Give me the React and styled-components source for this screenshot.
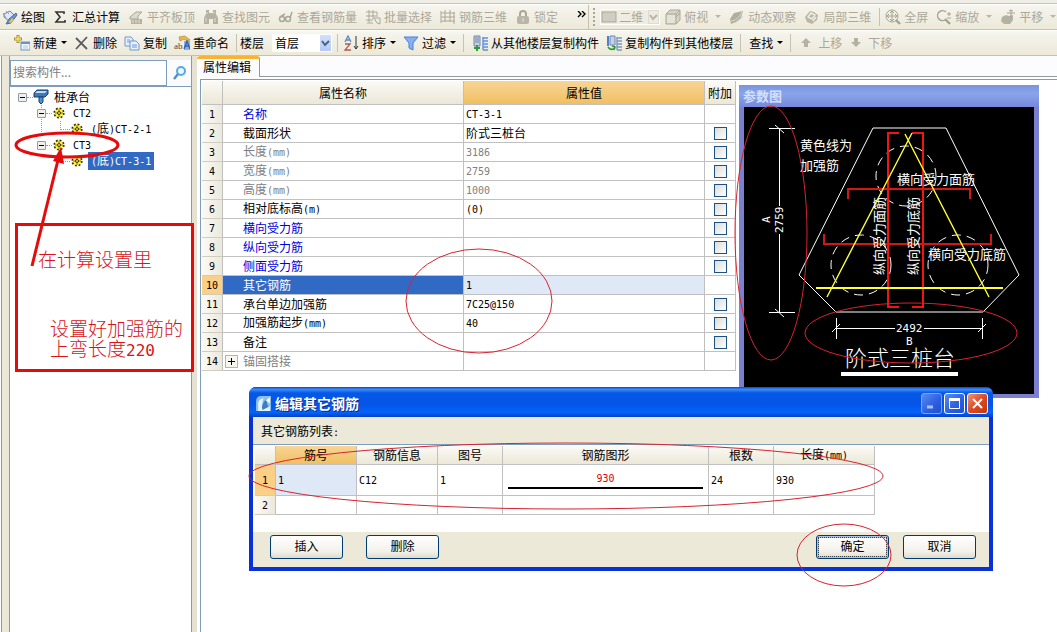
import React from 'react'
import styled, { createGlobalStyle, css } from 'styled-components'

const GlobalStyle = createGlobalStyle`
* {
    box-sizing: border-box;
}
body {
    margin: 0;
    background: #ffffff;
    color: #000000;
    font-family: "Noto Sans CJK SC", "Liberation Sans", sans-serif;
    font-size: 12px;
    line-height: 16px;
    overflow: hidden;
}
button, input, select {
    font: inherit;
    color: inherit;
    margin: 0;
}
`;

const Page = styled.div`
display: flex;
flex-direction: column;
min-height: 100vh;
position: relative;
overflow: hidden;
`;

const MenuEdge = styled.div`
height: 4px;
background: #efeee6;
border-bottom: 1px solid #c9c6b4;
`;

const ToolButton = styled.button`
display: flex;
align-items: center;
flex-shrink: 0;
gap: 3px;
padding: 0 8px 0 0;
border: 0;
background: none;
color: ${props => props.disabled ? '#aca899' : '#000000'};
`;

const Bar = styled.div`
display: flex;
align-items: center;
height: 26px;
padding-left: ${props => props.$indent}px;
overflow: hidden;
white-space: nowrap;
background: linear-gradient(#f6f5ef, #ece9d8);
border-top: 1px solid #fdfdfa;
border-bottom: 1px solid #c5c2ae;
    ${ToolButton} {
        padding-right: ${props => props.$tight ? 7 : 8}px;
    }
`;

const Separator = styled.span`
flex-shrink: 0;
width: 1px;
height: 18px;
margin: 0 ${props => props.$gap || 5}px 0 0;
background: #c5c2b0;
`;

const Grip = styled.span`
flex-shrink: 0;
width: 2px;
height: 18px;
margin: 0 5px 0 4px;
background: repeating-linear-gradient(#a9a695 0 2px, transparent 2px 4px);
`;

const Overflow = styled.button`
flex-shrink: 0;
width: 23px;
height: 24px;
padding: 0 2px 8px 11px;
border: 0;
border-right: 1px solid #c5c2b0;
background: none;
line-height: 14px;
`;

const BarLabel = styled.label`
flex-shrink: 0;
padding-right: 8px;
`;

const Combo = styled.span`
position: relative;
display: flex;
align-items: center;
flex-shrink: 0;
width: 60px;
height: ${props => props.$disabled ? 16 : 18}px;
margin-right: 5px;
border: 1px solid #fdfdfb;
background: ${props => props.$disabled ? '#efede1' : '#ffffff'};
color: ${props => props.$disabled ? '#aca899' : '#000000'};
    select {
        appearance: none;
        flex: 1;
        min-width: 0;
        padding: 0 0 0 2px;
        border: 0;
        background: none;
        color: inherit;
        opacity: 1;
        line-height: 16px;
    }
`;

const ComboArrow = styled.span`
display: flex;
align-items: center;
justify-content: center;
width: 11px;
height: 100%;
background: ${props => props.$disabled ? '#eeece2' : 'linear-gradient(#d3e0fc, #b4c9f4)'};
border: ${props => props.$disabled ? '1px solid #dedbd0' : '0'};
`;

const Body = styled.div`
display: flex;
flex: 1;
`;

const Edge = styled.div`
width: 9px;
flex-shrink: 0;
background: #ebe8d9;
border-left: 1px solid #ffffff;
box-shadow: inset 1px 0 #7f9db9;
`;

const SidePanel = styled.aside`
width: 183px;
flex-shrink: 0;
display: flex;
flex-direction: column;
padding-top: 4px;
background: #f1f0e8;
border-left: 1px solid #7f9db9;
border-right: 1px solid #7f9db9;
`;

const SearchRow = styled.div`
display: flex;
align-items: center;
background: #fbfbfd;
    input {
        width: 158px;
        height: 26px;
        padding: 0 2px 4px;
        border: 1px solid #7f9db9;
        background: #ffffff;
    }
    input::placeholder {
        color: #808080;
        opacity: 1;
    }
    button {
        display: flex;
        padding: 4px;
        border: 0;
        background: none;
    }
`;

const Tree = styled.ul`
flex: 1;
margin: 0;
padding: 2px 0 0;
list-style: none;
background: #ffffff;
border-top: 1px solid #7f9db9;
`;

const trunk = css`
background: repeating-linear-gradient(#9a9a9a 0 1px, transparent 1px 2px) 31px 0 / 1px 16px no-repeat;
`;

const TreeRow = styled.li`
display: flex;
align-items: center;
height: 16px;
padding-left: ${props => [8, 27, 50][props.$level]}px;
${props => props.$trunk && trunk}
`;

const Toggle = styled.button`
width: 9px;
height: 9px;
padding: 0;
border: 1px solid #8b9bb0;
border-radius: 1px;
background: linear-gradient(#000000, #000000) center / 5px 1px no-repeat, #f1f0ea;
`;

const Branch = styled.span`
width: ${props => props.$wide ? 10 : 6}px;
height: ${props => props.$wide ? 9 : 1}px;
align-self: ${props => props.$wide ? 'flex-start' : 'center'};
border-bottom: 1px dotted #9a9a9a;
border-left: ${props => props.$wide ? '1px dotted #9a9a9a' : '0'};
`;

const NodeName = styled.span`
margin-left: 2px;
padding: 0 3px;
background: ${props => props.$selected ? '#316ac5' : 'none'};
color: ${props => props.$selected ? '#ffffff' : '#000000'};
`;

const Splitter = styled.div`
width: 5px;
flex-shrink: 0;
background: #e5e2d3;
`;

const Main = styled.main`
flex: 1;
min-width: 0;
display: flex;
flex-direction: column;
background: #ffffff;
`;

const TabStrip = styled.div`
display: flex;
height: 21px;
background: #fcfcfe;
    &::after {
        content: '';
        flex: 1;
        border-bottom: 1px solid #919b9c;
    }
`;

const Tab = styled.button`
padding: 0 8px 3px 6px;
border: 0;
border-top: 3px solid #f9b233;
border-right: 1px solid #919b9c;
border-radius: 3px 3px 0 0;
background: #fcfcfe;
`;

const Editor = styled.section`
flex: 1;
margin: 2px 0 0 3px;
padding: 1px 0 0 1px;
border-top: 1px solid #7f9db9;
border-left: 1px solid #7f9db9;
`;

const Grid = styled.table`
width: ${props => props.$width}px;
table-layout: fixed;
border-collapse: separate;
border-spacing: 0;
`;

const headFill = css`
background: ${props => props.$active ? 'linear-gradient(#f8d596, #f0bf62)' : 'linear-gradient(#fbfaf5, #ebe8d8)'};
`;

const HeadCell = styled.th`
height: ${props => props.$small ? 18 : 24}px;
padding: 0;
font-weight: 400;
white-space: nowrap;
border-right: 1px solid #c0c0c0;
border-bottom: 1px solid #c0c0c0;
${headFill}
`;

const RowHead = styled.th`
padding: 0;
font-weight: 400;
border-right: 1px solid #c0c0c0;
border-bottom: 1px solid #d0cdbf;
background: ${props => props.$active ? '#fbcf86' : 'linear-gradient(90deg, #fbfaf6, #ebe9dc)'};
`;

const tones = { blue: '#0000e0', gray: '#808080', black: '#000000' }

const Cell = styled.td`
height: ${props => props.$tall ? 31 : 19}px;
padding: 0 0 0 ${props => props.$indent || 2}px;
line-height: 16px;
white-space: nowrap;
border-right: 1px solid #c0c0c0;
border-bottom: 1px solid #c0c0c0;
color: ${props => props.$selected ? '#ffffff' : tones[props.$tone || 'black']};
background: ${props => props.$selected ? '#316ac5' : props.$current ? '#dfe8f6' : '#ffffff'};
`;

const NameLine = styled.span`
display: flex;
align-items: center;
gap: 5px;
`;

const Expand = styled.button`
width: 13px;
height: 13px;
padding: 0;
border: 1px solid #b5b5b0;
background:
    linear-gradient(#000000, #000000) center / 7px 1px no-repeat,
    linear-gradient(#000000, #000000) center / 1px 7px no-repeat,
    #f7f6f0;
`;

const CheckBox = styled.input`
appearance: none;
display: block;
width: 13px;
height: 13px;
margin: 0 0 0 7px;
border: 1px solid #1c5180;
background: linear-gradient(135deg, #dcdcd7, #ffffff);
`;

const Mono = styled.span`
font-family: "DejaVu Sans Mono", "Liberation Mono", monospace;
font-size: ${props => props.$size || 10}px;
`;

const Viewer = styled.section`
position: absolute;
left: 739px;
top: 85px;
width: 300px;
padding: 0 5px 4px;
background: #7b7fd0;
    h2 {
        margin: 0 -5px;
        padding: 3px 4px;
        height: 22px;
        background: linear-gradient(#7a94e0, #8aa5ea 40%, #7688dc);
        color: #d5e0fa;
        font-size: 13px;
        line-height: 16px;
    }
    svg {
        display: block;
        width: 100%;
        background: #000000;
    }
`;

const Dialog = styled.section`
position: absolute;
left: 249px;
top: 387px;
width: 744px;
padding: 0 4px 4px;
border-radius: 7px 7px 0 0;
background: #0831d9;
`;

const TitleBar = styled.header`
display: flex;
align-items: center;
gap: 2px;
height: 30px;
margin: 0 -4px;
padding: 2px 5px 0 6px;
border-radius: 7px 7px 0 0;
background: linear-gradient(#0a46c8, #3a8cf8 8%, #0558e6 20%, #0555e8 60%, #0464fa 85%, #0340c8);
color: #ffffff;
    h2 {
        flex: 1;
        margin: 0 0 0 1px;
        font-size: 14px;
        line-height: 20px;
        text-shadow: 1px 1px #0a2a80;
    }
`;

const WindowButton = styled.button`
display: flex;
align-items: center;
justify-content: center;
width: 21px;
height: 21px;
padding: 0;
border: 1px solid ${props => props.$dim ? '#7ea2f0' : '#ffffff'};
border-radius: 3px;
background: ${props => props.$close ? 'linear-gradient(135deg, #f0957a, #dc4a22 50%, #c03810)' : 'linear-gradient(135deg, #5a8cf0, #2a5ee0 60%, #1f4fd0)'};
`;

const DialogBody = styled.div`
background: #ece9d8;
    p {
        margin: 0;
        padding: 6px 8px 5px;
    }
`;

const ListArea = styled.div`
height: 88px;
margin-top: -2px;
padding: 1px 0 0 2px;
background: #ffffff;
border-top: 1px solid #7f9db9;
`;

const Shape = styled.div`
display: flex;
flex-direction: column;
align-items: center;
gap: 1px;
margin: 0 5px 0 3px;
border-bottom: 2px solid #000000;
color: #e00000;
`;

const Footer = styled.footer`
display: flex;
justify-content: space-between;
padding: 3px 13px 8px 17px;
`;

const ButtonPair = styled.div`
display: flex;
gap: ${props => props.$gap}px;
`;

const PushButton = styled.button`
width: 73px;
height: 24px;
padding: 0;
border: 1px solid #003c74;
border-radius: 3px;
background: linear-gradient(#ffffff, #f3f1ea 70%, #dfdccd);
box-shadow: ${props => props.$default ? 'inset 0 0 0 2px #a9c2ee' : 'none'};
line-height: 16px;
    span {
        display: block;
        margin: 1px;
        padding-bottom: 2px;
        border: 1px ${props => props.$default ? 'dotted #404040' : 'solid transparent'};
    }
`;

const Note = styled.div`
position: absolute;
left: 15px;
top: 223px;
width: 179px;
height: 149px;
padding: 23px 0 0 20px;
border: 3px solid #e60b0b;
color: #d81418;
font-size: 19px;
font-weight: 300;
line-height: 20px;
    p {
        margin: 0;
    }
    p + p {
        margin: 49px 0 0 12px;
        white-space: nowrap;
    }
`;

const Marks = styled.svg`
position: absolute;
left: 0;
top: 0;
pointer-events: none;
`;

const icons = {
    paint: (
        <>
            <path d="M2 5l6-3 5 5-6 5-5-4z" fill="#dfe8f4" stroke="#6482a8" />
            <path d="M7 10l7-6 1 2-6 8-5 1z" fill="#6a93d0" stroke="#4a6c9c" />
            <path d="M1 4l3 5M4 2l3 3" stroke="#8ba2bd" />
            <path d="M7 13l3-4 2 2-3 3z" fill="#e8c060" />
        </>
    ),
    sum: <path d="M11 5V3H3l4 5-4 5h9v-2" fill="none" stroke="#333333" strokeWidth="1.6" />,
    slab: (
        <>
            <path d="M2 8l6-5h6l-4 4v3H2z" fill="#dddacb" stroke="#aaa797" />
            <path d="M3 10h11v5H3z" fill="#b5b2a3" />
            <path d="M5 11v3M8 11v3M11 11v3" stroke="#e6e3d6" />
        </>
    ),
    binoculars: (
        <>
            <path d="M3 1h3v3h4V1h3v4l2 4v6h-5v-5H6v5H1V9l2-4z" fill="#b5b2a3" />
            <path d="M3 9v4M12 9v4M4 3v2M11 3v2" stroke="#dedbcd" />
        </>
    ),
    glasses: (
        <g fill="none" stroke="#aaa797" strokeWidth="1.5">
            <circle cx="4" cy="10" r="2.5" /><circle cx="10" cy="10" r="2.5" /><path d="M6 10h2M12 9l2-6M2 8l5-3" />
        </g>
    ),
    batch: (
        <g fill="none" stroke="#aaa797">
            <path d="M1 3h11M1 7h10M1 11h7M4 1v12M8 1v9M12 3v5" /><path d="M9 9h6v6l-3-1zM2 14h6" />
        </g>
    ),
    mesh: (
        <g fill="none" stroke="#aaa797">
            <path d="M1 2v12M5 1v12M10 1v12M14 3v12M1 4h14M1 8h14M1 12h14" />
        </g>
    ),
    lock: (
        <>
            <path d="M5 8V5a3 3 0 016 0v3" fill="none" stroke="#aaa797" strokeWidth="2" />
            <rect x="2" y="7" width="12" height="8" rx="2" fill="#b9b6a7" />
            <path d="M8 9v4" stroke="#e6e3d6" />
        </>
    ),
    flat: <rect x="1" y="3" width="14" height="10" fill="#d0cec3" stroke="#aaa797" />,
    cube: (
        <>
            <path d="M1 5l4-4h10v10l-4 4H1z" fill="#d7d4c6" stroke="#aaa797" />
            <path d="M1 5h10v10M11 5l4-4M11 8l4-4" fill="none" stroke="#aaa797" />
            <path d="M2 6h8v8H2z" fill="#e5e2d6" />
        </>
    ),
    orbit: (
        <>
            <path d="M1 10l4-6 9-2-2 7-5 4-5 2z" fill="#b1ae9f" />
            <path d="M2 12c4 0 9-4 11-9M5 14c4-1 8-4 9-7" fill="none" stroke="#dfdccf" />
        </>
    ),
    local: (
        <>
            <path d="M1 8l5-6 4 1 4 3-1 5-5 4-5-2z" fill="#b9b6a7" />
            <path d="M4 8l3-4 4 2-3 4zM9 12l3-4" fill="none" stroke="#efede2" strokeWidth="1.4" />
        </>
    ),
    full: (
        <g fill="none" stroke="#a5a292">
            <circle cx="7" cy="7" r="6" /><path d="M7 2v10M2 7h10M5 4l2-2 2 2M5 10l2 2 2-2M4 5L2 7l2 2M10 5l2 2-2 2" />
            <path d="M11 11l4 4" strokeWidth="2.4" />
        </g>
    ),
    zoom: (
        <g fill="none" stroke="#a5a292">
            <path d="M10 3a5 5 0 10-1 8" strokeWidth="1.4" /><path d="M9 10l5 5" strokeWidth="2.4" /><path d="M11 5h4M13 3v4M11 9h4" />
        </g>
    ),
    pan: (
        <>
            <path d="M2 8l4-2 3 1 4-1v5l-3 4H4L1 12z" fill="#b5b2a3" />
            <path d="M11 1v8M7 4h8M9 2l2-1 2 1" fill="none" stroke="#a5a292" />
        </>
    ),
    create: (
        <>
            <rect x="7" y="7" width="9" height="8" fill="#f4f9ff" stroke="#6b93c8" />
            <path d="M7 8h9" stroke="#6b93c8" strokeWidth="2" />
            <path d="M9 11h5M9 13h5" stroke="#a9c4e6" />
            <path d="M4 0v8M0 4h8" stroke="#a8932f" strokeWidth="3" />
            <path d="M4 1v6M1 4h6" stroke="#f5e36a" strokeWidth="1.4" />
        </>
    ),
    remove: <path d="M2 3l11 11M13 2L2 14" stroke="#5c5c5c" strokeWidth="1.8" />,
    copy: (
        <g fill="#e8f1fd" stroke="#6f97d0">
            <path d="M1 2h6l2 2v7H1z" /><path d="M6 6h6l3 3v6H6z" /><path d="M8 10h5M8 12h5M3 5h3M3 7h3" />
        </g>
    ),
    rename: (
        <>
            <path d="M5 2l6-1 5 4-3 1-3-2-4 2z" fill="#edb84a" stroke="#a97c24" strokeWidth=".6" />
            <path d="M10 6h6v9h-6z" fill="#8db0e6" />
            <text x="0" y="14" fontSize="9" fontFamily="Liberation Serif" fill="#444444">ab</text>
            <path d="M10 14l3-8 3 8M11 11h4" fill="none" stroke="#2f5faf" strokeWidth="1.3" />
        </>
    ),
    sort: (
        <>
            <path d="M2 7l3-6 3 6M3 5h4" fill="none" stroke="#5f86c8" strokeWidth="1.3" />
            <path d="M2 9h5l-5 6h6" fill="none" stroke="#b35a50" strokeWidth="1.3" />
            <path d="M13 1v13M11 11l2 3 2-3" fill="none" stroke="#333333" />
        </>
    ),
    filter: <path d="M1 2h14l-5 6v7l-4-2V8z" fill="#86b0f4" stroke="#4c7fd6" />,
    fromFloor: (
        <>
            <path d="M2 1h6v10H2z" fill="#c3d2e6" stroke="#7486a3" />
            <path d="M3 3h4M3 5h4M3 7h4" stroke="#7486a3" />
            <path d="M11 3h5M11 6h5M11 9h5M11 12h5M11 15h5M11 2v13" stroke="#5f90e0" strokeWidth="1.4" />
            <path d="M2 13h6M5 10v6" stroke="#2f9a3c" strokeWidth="2" />
        </>
    ),
    toFloor: (
        <>
            <path d="M4 1h5v9H4z" fill="#c3d2e6" stroke="#7486a3" />
            <path d="M1 1h2v10H1z" fill="#4f7fd0" />
            <path d="M11 3h5M11 6h5M11 9h5M11 12h5M11 15h5M11 2v13" stroke="#7f98c0" strokeWidth="1.4" />
            <path d="M2 12c2 3 5 3 7 1M6 11l3 1-1 3" fill="none" stroke="#2f9a3c" strokeWidth="1.6" />
        </>
    ),
    up: <path d="M7 3l5 5H9v4H5V8H2z" fill="#b5b2a3" />,
    down: <path d="M7 12l5-5H9V3H5v4H2z" fill="#b5b2a3" />,
    search: (
        <>
            <circle cx="10" cy="6" r="4" fill="#e9f5ff" stroke="#5aa7e6" strokeWidth="2" />
            <path d="M7 9l-4 5" stroke="#4a8fd0" strokeWidth="2.4" />
        </>
    ),
    cap: (
        <>
            <path d="M1 4l3-3h11v4l-3 3H1z" fill="#3f78b4" stroke="#16416f" />
            <path d="M2 4l2-2h10l-2 2z" fill="#bcdcf5" />
            <path d="M6 8h4v5l-2 2-2-2z" fill="#4f92d4" stroke="#16416f" />
        </>
    ),
    gear: (
        <>
            <circle cx="7" cy="8" r="4.500" fill="#fdf03a" />
            <circle cx="7" cy="8" r="4.800" fill="none" stroke="#2f2a00" strokeWidth="1.6" strokeDasharray="1.900 1.870" />
            <circle cx="7" cy="8" r="1.500" fill="#f8ee70" stroke="#2f2a00" />
            <path d="M7 4v2M7 10v2M3 8h2M9 8h2" stroke="#6b6000" strokeWidth=".8" />
        </>
    ),
    app: (
        <>
            <path d="M1 15V6q0-5 5-5h9v14z" fill="#8fc0ea" />
            <path d="M3 15V8q0-4 5-5-2 5 0 7t6 0v5z" fill="#e6f3fc" />
            <path d="M7 14q-2-6 5-11-2 5 1 8z" fill="#3d7fc4" />
            <path d="M10 5l4-3v6z" fill="#f5fbff" />
        </>
    ),
}

const Icon = ({ name, size = 16 }) => (
    <svg width={size} height={size} viewBox="0 0 16 16" aria-hidden="true">{icons[name]}</svg>
)

const CaretSvg = styled.svg`
flex-shrink: 0;
margin-left: ${props => props.$far ? 3 : 0}px;
`;

const Caret = ({ disabled }) => (
    <CaretSvg $far={disabled} width="7" height="4" viewBox="0 0 7 4" aria-hidden="true">
        <path d="M1 0h6L4 3z" fill={disabled ? '#b9b6a7' : '#000000'} />
    </CaretSvg>
)

const Chevron = ({ disabled }) => (
    <svg width="9" height="7" viewBox="0 0 9 7" aria-hidden="true">
        <path d="M1 1l3 4 4-4" fill="none" stroke={disabled ? '#b9b6a7' : '#4d6185'} strokeWidth="2" />
    </svg>
)

// latin letters and digits take half of a character cell
const Text = ({ children, size }) => (
    children.split(/([\x20-\x7e]+)/).map((part, i) => i % 2 ? <Mono key={i} $size={size}>{part}</Mono> : part)
)

const Tool = ({ icon, children, menu, disabled }) => (
    <ToolButton disabled={disabled}>
        {icon && <Icon name={icon} />}
        {children}
        {menu && <Caret disabled={disabled} />}
    </ToolButton>
)

const properties = [
    { name: '名称', value: 'CT-3-1', tone: 'blue', noCheck: true },
    { name: '截面形状', value: '阶式三桩台' },
    { name: '长度(mm)', value: '3186', tone: 'gray' },
    { name: '宽度(mm)', value: '2759', tone: 'gray' },
    { name: '高度(mm)', value: '1000', tone: 'gray' },
    { name: '相对底标高(m)', value: '(0)' },
    { name: '横向受力筋', value: '', tone: 'blue' },
    { name: '纵向受力筋', value: '', tone: 'blue' },
    { name: '侧面受力筋', value: '', tone: 'blue' },
    { name: '其它钢筋', value: '1', noCheck: true, current: true },
    { name: '承台单边加强筋', value: '7C25@150' },
    { name: '加强筋起步(mm)', value: '40' },
    { name: '备注', value: '' },
    { name: '锚固搭接', value: '', tone: 'gray', noCheck: true, group: true },
]

const ViewBar = () => (
    <Bar $indent={2}>
        <Tool icon="paint">绘图</Tool>
        <Tool icon="sum">汇总计算</Tool>
        <Tool icon="slab" disabled>平齐板顶</Tool>
        <Tool icon="binoculars" disabled>查找图元</Tool>
        <Tool icon="glasses" disabled>查看钢筋量</Tool>
        <Tool icon="batch" disabled>批量选择</Tool>
        <Tool icon="mesh" disabled>钢筋三维</Tool>
        <Tool icon="lock" disabled>锁定</Tool>
        <Overflow aria-label="更多">
            <svg width="9" height="7" viewBox="0 0 9 7"><path d="M1 0l3 3-3 3M5 0l3 3-3 3" fill="none" stroke="#000000" strokeWidth="1.4" /></svg>
        </Overflow>
        <Grip />
        <Combo $disabled>
            <Icon name="flat" />
            <select disabled aria-label="视图"><option>二维</option></select>
            <ComboArrow $disabled><Chevron disabled /></ComboArrow>
        </Combo>
        <Tool icon="cube" menu disabled>俯视</Tool>
        <Tool icon="orbit" disabled>动态观察</Tool>
        <Tool icon="local" disabled>局部三维</Tool>
        <Separator />
        <Tool icon="full" disabled>全屏</Tool>
        <Tool icon="zoom" menu disabled>缩放</Tool>
        <Tool icon="pan" menu disabled>平移</Tool>
    </Bar>
)

const EditBar = () => (
    <Bar $indent={14} $tight>
        <Tool icon="create" menu>新建</Tool>
        <Tool icon="remove">删除</Tool>
        <Tool icon="copy">复制</Tool>
        <Tool icon="rename">重命名</Tool>
        <Separator $gap={3} />
        <BarLabel htmlFor="floor">楼层</BarLabel>
        <Combo>
            <select id="floor"><option>首层</option></select>
            <ComboArrow><Chevron /></ComboArrow>
        </Combo>
        <Separator />
        <Tool icon="sort" menu>排序</Tool>
        <Tool icon="filter" menu>过滤</Tool>
        <Separator $gap={8} />
        <Tool icon="fromFloor">从其他楼层复制构件</Tool>
        <Tool icon="toFloor">复制构件到其他楼层</Tool>
        <Separator $gap={8} />
        <Tool menu>查找</Tool>
        <Separator $gap={8} />
        <Tool icon="up" disabled>上移</Tool>
        <Tool icon="down" disabled>下移</Tool>
    </Bar>
)

const ComponentTree = () => (
    <SidePanel>
        <SearchRow>
            <input type="text" placeholder="搜索构件..." aria-label="搜索构件" />
            <button aria-label="搜索"><Icon name="search" /></button>
        </SearchRow>
        <Tree>
            <TreeRow $level={0}>
                <Toggle aria-label="收起" /><Branch /><Icon name="cap" /><NodeName>桩承台</NodeName>
            </TreeRow>
            <TreeRow $level={1} $trunk>
                <Toggle aria-label="收起" /><Branch /><Icon name="gear" /><NodeName><Text>CT2</Text></NodeName>
            </TreeRow>
            <TreeRow $level={2} $trunk>
                <Branch $wide /><Icon name="gear" /><NodeName><Text>(底)CT-2-1</Text></NodeName>
            </TreeRow>
            <TreeRow $level={1}>
                <Toggle aria-label="收起" /><Branch /><Icon name="gear" /><NodeName><Text>CT3</Text></NodeName>
            </TreeRow>
            <TreeRow $level={2}>
                <Branch $wide /><Icon name="gear" /><NodeName $selected><Text>(底)CT-3-1</Text></NodeName>
            </TreeRow>
        </Tree>
    </SidePanel>
)

const PropertyTable = () => (
    <Grid $width={534}>
        <colgroup>
            <col width="21" /><col width="241" /><col width="241" /><col width="31" />
        </colgroup>
        <thead>
            <tr>
                <HeadCell />
                <HeadCell>属性名称</HeadCell>
                <HeadCell $active>属性值</HeadCell>
                <HeadCell>附加</HeadCell>
            </tr>
        </thead>
        <tbody>
            {properties.map((row, i) => (
                <tr key={row.name}>
                    <RowHead $active={row.current}><Mono>{i + 1}</Mono></RowHead>
                    <Cell $indent={row.group ? 2 : 20} $tone={row.tone} $selected={row.current}>
                        <NameLine>
                            {row.group && <Expand aria-label="展开" />}
                            <span><Text>{row.name}</Text></span>
                        </NameLine>
                    </Cell>
                    <Cell $tone={row.tone === 'gray' ? 'gray' : 'black'} $current={row.current}><Text>{row.value}</Text></Cell>
                    <Cell>{!row.noCheck && <CheckBox type="checkbox" aria-label={row.name} />}</Cell>
                </tr>
            ))}
        </tbody>
    </Grid>
)

const Diagram = () => (
    <svg viewBox="744 107 290 287" fill="none" stroke="#ffffff">
        <path d="M873 128h73l73 147-36 37H836l-37-37z" />
        <g strokeDasharray="9 6">
            <circle cx="906" cy="176" r="30" />
            <circle cx="861" cy="265" r="30" />
            <circle cx="958" cy="265" r="30" />
        </g>
        <g stroke="#f01414" strokeWidth="2">
            <path d="M899 133h-11v174h11M912 133h11v174h-11" />
            <path d="M848 199v-10h122v10M824 234v10h167v-10" stroke="#d01818" />
        </g>
        <g stroke="#ffff30">
            <path d="M912 133l-85 164M905 134l84 163" strokeWidth="1.4" />
            <path d="M816 288h187" strokeWidth="2" />
        </g>
        <path d="M769 128.500h26M769 312.500h26M779.500 128v78M779.500 234v78M775 125l9 8M775 309l9 8" />
        <path d="M836.500 318v21M982.500 318v21M836 328.500h59M924 328.500h59M832 332l8-8M978 332l8-8" />
        <path d="M841 374h117" strokeWidth="4" />
        <g fill="#ffffff" stroke="none" fontSize="13">
            <text x="800" y="150">黄色线为</text>
            <text x="800" y="170">加强筋</text>
            <text x="897" y="184">横向受力面筋</text>
            <text x="928" y="259">横向受力底筋</text>
            <text transform="translate(884 275) rotate(-90)">纵向受力面筋</text>
            <text transform="translate(918 275) rotate(-90)">纵向受力底筋</text>
            <text x="845" y="366" fontSize="22" fontWeight="300">阶式三桩台</text>
            <g fontFamily="DejaVu Sans Mono" fontSize="11">
                <text x="896" y="332">2492</text>
                <text x="906" y="345">B</text>
                <text transform="translate(783 233) rotate(-90)">2759</text>
                <text transform="translate(770 223) rotate(-90)">A</text>
            </g>
        </g>
    </svg>
)

const RebarDialog = () => (
    <Dialog role="dialog" aria-labelledby="rebar-title">
        <TitleBar>
            <Icon name="app" size={17} />
            <h2 id="rebar-title">编辑其它钢筋</h2>
            <WindowButton $dim aria-label="最小化">
                <svg width="13" height="13"><path d="M2 10h6" stroke="#a8c0f6" strokeWidth="3" /></svg>
            </WindowButton>
            <WindowButton aria-label="最大化">
                <svg width="13" height="13"><path d="M1.500 2v9.500h10V2M1 2.500h11" fill="none" stroke="#ffffff" /><path d="M1 2.500h11" stroke="#ffffff" strokeWidth="3" /></svg>
            </WindowButton>
            <WindowButton $close aria-label="关闭">
                <svg width="13" height="13"><path d="M2 2l9 9M11 2l-9 9" stroke="#ffffff" strokeWidth="2" /></svg>
            </WindowButton>
        </TitleBar>
        <DialogBody>
            <p><Text>其它钢筋列表:</Text></p>
            <ListArea>
                <Grid $width={620}>
                    <colgroup>
                        <col width="21" /><col width="81" /><col width="81" /><col width="65" /><col width="206" /><col width="65" /><col width="101" />
                    </colgroup>
                    <thead>
                        <tr>
                            <HeadCell $small />
                            <HeadCell $small $active>筋号</HeadCell>
                            <HeadCell $small>钢筋信息</HeadCell>
                            <HeadCell $small>图号</HeadCell>
                            <HeadCell $small>钢筋图形</HeadCell>
                            <HeadCell $small>根数</HeadCell>
                            <HeadCell $small><Text>长度(mm)</Text></HeadCell>
                        </tr>
                    </thead>
                    <tbody>
                        <tr>
                            <RowHead $active><Mono>1</Mono></RowHead>
                            <Cell $tall $current><Mono>1</Mono></Cell>
                            <Cell $tall><Mono>C12</Mono></Cell>
                            <Cell $tall><Mono>1</Mono></Cell>
                            <Cell $tall><Shape><Mono>930</Mono></Shape></Cell>
                            <Cell $tall><Mono>24</Mono></Cell>
                            <Cell $tall><Mono>930</Mono></Cell>
                        </tr>
                        <tr>
                            <RowHead><Mono>2</Mono></RowHead>
                            <Cell /><Cell /><Cell /><Cell /><Cell /><Cell />
                        </tr>
                    </tbody>
                </Grid>
            </ListArea>
            <Footer>
                <ButtonPair $gap={23}>
                    <PushButton><span>插入</span></PushButton>
                    <PushButton><span>删除</span></PushButton>
                </ButtonPair>
                <ButtonPair $gap={14}>
                    <PushButton $default><span>确定</span></PushButton>
                    <PushButton><span>取消</span></PushButton>
                </ButtonPair>
            </Footer>
        </DialogBody>
    </Dialog>
)

const App = () => (
    <Page>
        <GlobalStyle />
        <MenuEdge />
        <ViewBar />
        <EditBar />
        <Body>
            <Edge />
            <ComponentTree />
            <Splitter />
            <Main>
                <TabStrip><Tab>属性编辑</Tab></TabStrip>
                <Editor><PropertyTable /></Editor>
            </Main>
        </Body>
        <Viewer>
            <h2>参数图</h2>
            <Diagram />
        </Viewer>
        <RebarDialog />
        <Note>
            <p>在计算设置里</p>
            <p><Text size={16}>设置好加强筋的</Text><br /><Text size={16}>上弯长度220</Text></p>
        </Note>
        <Marks width="1057" height="632" fill="none" stroke="#d8232f" aria-hidden="true">
            <ellipse cx="479" cy="301" rx="73" ry="52" />
            <ellipse cx="771" cy="233" rx="36" ry="127" />
            <ellipse cx="911" cy="333" rx="106" ry="30" />
            <ellipse cx="566" cy="476" rx="317" ry="33" />
            <ellipse cx="844" cy="555" rx="47" ry="31" />
            <ellipse cx="67" cy="145" rx="51" ry="12" stroke="#e60b0b" strokeWidth="3" />
            <path d="M32 266l26-106" stroke="#e60b0b" strokeWidth="3" />
            <path d="M61 147l-8 14 11 3z" fill="#e60b0b" stroke="none" />
        </Marks>
    </Page>
)

export default App
